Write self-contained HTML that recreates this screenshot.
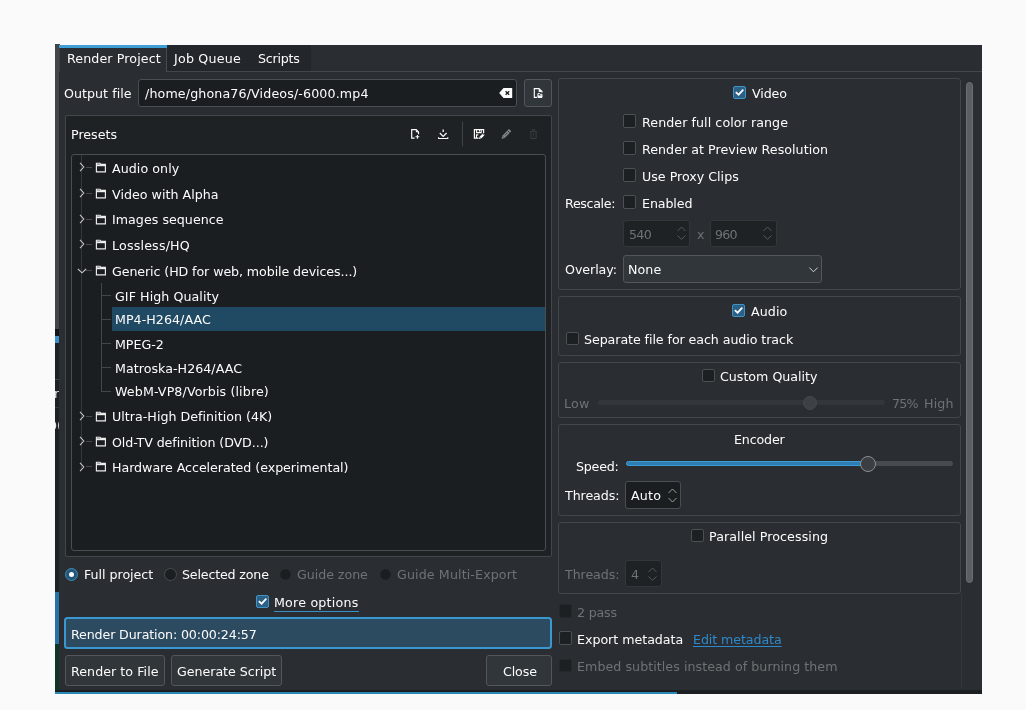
<!DOCTYPE html>
<html lang="en"><head><meta charset="utf-8"><title>Rendering</title>
<style>
html,body{margin:0;padding:0;background:#fafafa;}
#root{position:relative;width:1026px;height:710px;overflow:hidden;background:#fafafa;font-family:"DejaVu Sans", "Liberation Sans", sans-serif;font-size:12.65px;}
#root div,#root svg{position:absolute;box-sizing:border-box;}
.t{white-space:pre;will-change:transform;line-height:18px;height:18px;}
.frame{border:1px solid #43474b;border-radius:3px;}
.view{background:#1b1e20;border:1px solid #4a4e52;border-radius:3px;}
.btn{background:#31363b;border:1px solid #53575b;border-radius:3px;}
.cb{width:13px;height:13.4px;border:1px solid #4c5053;border-radius:2px;background:#1d2023;}
.cb.on{height:12.9px;border-color:#4093c4;background:#2b6186;}
.cb.dis{border-color:#26292c;background:#1d2023;}
.rb{width:13px;height:13px;border-radius:50%;border:1px solid #65696c;background:#1f2225;}
.spin{background:#1b1e20;border:1px solid #4a4e52;border-radius:3px;}
.spin.dis{border-color:#33373a;background:#1f2225;}

</style></head>
<body>
<div id="root">
<!-- underlying application strip -->
<div style="left:55px;top:44px;width:5px;height:285px;background:#424445"></div>
<div style="left:55px;top:329px;width:5px;height:7px;background:#121416"></div>
<div style="left:55px;top:336px;width:5px;height:7px;background:#3b8fc7"></div>
<div style="left:55px;top:343px;width:5px;height:249px;background:#1e2124"></div>
<div style="left:55px;top:591.6px;width:5px;height:52.2px;background:#2673aa"></div>
<div style="left:55px;top:643.8px;width:5px;height:48.2px;background:#0e3625"></div>
<div style="left:55px;top:690px;width:927px;height:4px;background:#1c1f22"></div>
<div style="left:55px;top:692px;width:622px;height:2px;background:#2b87b4"></div>
<div style="left:55px;top:379px;width:5px;height:1px;background:#44484b"></div>
<div style="left:55px;top:407px;width:5px;height:1px;background:#34383b"></div>
<div class="clip" style="left:55px;top:384px;width:4.5px;height:20px;overflow:hidden"><div class="t" style="left:-1.5px;top:1px;color:#e8e8e8">r</div></div>
<div class="clip" style="left:55px;top:415px;width:4.8px;height:20px;overflow:hidden"><div class="t" style="left:-6.5px;top:1.5px;color:#e8e8e8">0(</div></div>
<!-- dialog -->
<div id="dlg" style="left:59px;top:45px;width:923px;height:645px;background:#2a2e32"></div>
<!-- tabs -->
<div style="left:167px;top:45px;width:143.5px;height:26px;background:#23262a"></div>
<div style="left:59px;top:70.6px;width:923px;height:1px;background:#43474b"></div>
<div style="left:59px;top:45px;width:108px;height:27px;background:#2a2e32;border-left:1px solid #3c4044;border-right:1px solid #474b4f"></div>
<div style="left:59px;top:45px;width:108px;height:3px;background:#3d9fd6"></div>
<!-- output file -->
<div class="view" style="left:138.3px;top:79px;width:378.7px;height:27.6px"></div>
<div class="btn" style="left:524px;top:79px;width:28px;height:28px"></div>
<!-- presets frame -->
<div class="frame" style="left:64.5px;top:114.5px;width:487.5px;height:442px;background:#1f2225;border-radius:2px"></div>
<div class="view" style="left:71px;top:154px;width:475.3px;height:397px"></div>
<!-- icon overlay (page coordinates) -->
<svg id="ov" style="left:0;top:0" width="1026" height="710" viewBox="0 0 1026 710" fill="none">
<!-- clear text -->
<path d="M503.5 88H512.2V98H503.5L499.2 93Z" fill="#fcfcfc"/>
<path d="M505.6 91.2L509.2 94.8M509.2 91.2L505.6 94.8" stroke="#1b1e20" stroke-width="1.3"/>
<!-- open file -->
<path d="M537 97.4H534.3V88.6H539L542 91.6V92.6" stroke="#fcfcfc" stroke-width="1.15"/>
<path d="M538.7 88.4V92H542.3Z" fill="#fcfcfc"/>
<path d="M537.9 93.6H539.6L540.2 94.3H542V97.4H537.9Z" stroke="#fcfcfc" stroke-width="1"/>
<path d="M538 95.4H542V97.6H538Z" fill="#fcfcfc"/>
<!-- separator -->
<path d="M462.5 121.5V146.5" stroke="#3f4347" stroke-width="1"/>
<!-- document new -->
<path d="M414.6 138.2H411.7V129.7H416.2L418.5 132V134.3" stroke="#fcfcfc" stroke-width="1.2"/>
<path d="M415.9 129.7V132.3H418.5Z" fill="#fcfcfc"/>
<path d="M417.4 134.9V138.7M415.5 136.8H419.3" stroke="#fcfcfc" stroke-width="1.1"/>
<!-- download -->
<path d="M439.8 133L443.2 136.4L446.6 133" stroke="#fcfcfc" stroke-width="1.2"/>
<path d="M443.2 129.4V132" stroke="#fcfcfc" stroke-width="1.3"/>
<path d="M438.6 137.3V138.5H447.8V137.3" stroke="#fcfcfc" stroke-width="1.1"/>
<!-- save edit -->
<path d="M478.6 138.2H474.4V129.6H483.6V133" stroke="#fcfcfc" stroke-width="1.2"/>
<path d="M476.6 129.6V132.6H481.2V129.6" stroke="#fcfcfc" stroke-width="1.1"/>
<path d="M479.5 129.8V131.6" stroke="#fcfcfc" stroke-width="1"/>
<path d="M476.5 138V134.9H478.2" stroke="#fcfcfc" stroke-width="1.1"/>
<path d="M480.4 137.6L483.9 134.1" stroke="#fcfcfc" stroke-width="2.3"/>
<path d="M478.9 139.1L479.4 137L481 138.6Z" fill="#fcfcfc"/>
<path d="M482.4 133.6L484.4 135.6" stroke="#1f2225" stroke-width="0.7"/>
<!-- pencil (disabled-ish) -->
<path d="M503.5 136.8L510.1 130.2" stroke="#84878a" stroke-width="3.3"/>
<path d="M501.6 138.8L502.1 135.9L504.5 138.3Z" fill="#84878a"/>
<path d="M507.6 130.6L509.8 132.8" stroke="#1f2225" stroke-width="0.8"/>
<path d="M504.9 135.4L507.6 132.7" stroke="#1f2225" stroke-width="0.7"/>
<!-- trash (disabled) -->
<path d="M530.9 131.6V138.5H536.1V131.6M530 131.6H537M532.3 131.4V129.6H534.7V131.4" stroke="#383c3f" stroke-width="1"/>
<path d="M533.5 133V137" stroke="#303437" stroke-width="1"/>
</svg>
<!-- tree selection -->
<div style="left:112px;top:307px;width:433.3px;height:24px;background:#204a63"></div>
<!-- tree branches -->
<div style="left:81px;top:155px;width:1px;height:313px;background:#34383b"></div>
<div style="left:101px;top:283px;width:1px;height:109px;background:#43474a"></div>
<svg style="left:79.3px;top:162.40px" width="7" height="10" viewBox="0 0 7 10"><path d="M1 0.9l3.8 4.1-3.8 4.1" fill="none" stroke="#c4c6c7" stroke-width="1.1"/></svg>
<div style="left:85.5px;top:167.00px;width:6px;height:1px;background:#474b4e"></div>
<svg style="left:95px;top:162.20px" width="12" height="11" viewBox="0 0 12 11"><path d="M1.4 1.2h3.6l1 1.2h4.4v7.4H1.4z" fill="none" stroke="#ededed" stroke-width="1.15"/><rect x="1.4" y="2.3" width="9" height="1.9" fill="#ededed"/></svg>
<svg style="left:79.3px;top:188.15px" width="7" height="10" viewBox="0 0 7 10"><path d="M1 0.9l3.8 4.1-3.8 4.1" fill="none" stroke="#c4c6c7" stroke-width="1.1"/></svg>
<div style="left:85.5px;top:192.75px;width:6px;height:1px;background:#474b4e"></div>
<svg style="left:95px;top:187.95px" width="12" height="11" viewBox="0 0 12 11"><path d="M1.4 1.2h3.6l1 1.2h4.4v7.4H1.4z" fill="none" stroke="#ededed" stroke-width="1.15"/><rect x="1.4" y="2.3" width="9" height="1.9" fill="#ededed"/></svg>
<svg style="left:79.3px;top:213.90px" width="7" height="10" viewBox="0 0 7 10"><path d="M1 0.9l3.8 4.1-3.8 4.1" fill="none" stroke="#c4c6c7" stroke-width="1.1"/></svg>
<div style="left:85.5px;top:218.50px;width:6px;height:1px;background:#474b4e"></div>
<svg style="left:95px;top:213.70px" width="12" height="11" viewBox="0 0 12 11"><path d="M1.4 1.2h3.6l1 1.2h4.4v7.4H1.4z" fill="none" stroke="#ededed" stroke-width="1.15"/><rect x="1.4" y="2.3" width="9" height="1.9" fill="#ededed"/></svg>
<svg style="left:79.3px;top:239.40px" width="7" height="10" viewBox="0 0 7 10"><path d="M1 0.9l3.8 4.1-3.8 4.1" fill="none" stroke="#c4c6c7" stroke-width="1.1"/></svg>
<div style="left:85.5px;top:244.00px;width:6px;height:1px;background:#474b4e"></div>
<svg style="left:95px;top:239.20px" width="12" height="11" viewBox="0 0 12 11"><path d="M1.4 1.2h3.6l1 1.2h4.4v7.4H1.4z" fill="none" stroke="#ededed" stroke-width="1.15"/><rect x="1.4" y="2.3" width="9" height="1.9" fill="#ededed"/></svg>
<svg style="left:77px;top:267.55px" width="10" height="7" viewBox="0 0 10 7"><path d="M0.9 1l4.1 3.8 4.1-3.8" fill="none" stroke="#c4c6c7" stroke-width="1.1"/></svg>
<div style="left:85.5px;top:269.75px;width:6px;height:1px;background:#474b4e"></div>
<svg style="left:95px;top:264.95px" width="12" height="11" viewBox="0 0 12 11"><path d="M1.4 1.2h3.6l1 1.2h4.4v7.4H1.4z" fill="none" stroke="#ededed" stroke-width="1.15"/><rect x="1.4" y="2.3" width="9" height="1.9" fill="#ededed"/></svg>
<svg style="left:79.3px;top:410.90px" width="7" height="10" viewBox="0 0 7 10"><path d="M1 0.9l3.8 4.1-3.8 4.1" fill="none" stroke="#c4c6c7" stroke-width="1.1"/></svg>
<div style="left:85.5px;top:415.50px;width:6px;height:1px;background:#474b4e"></div>
<svg style="left:95px;top:410.70px" width="12" height="11" viewBox="0 0 12 11"><path d="M1.4 1.2h3.6l1 1.2h4.4v7.4H1.4z" fill="none" stroke="#ededed" stroke-width="1.15"/><rect x="1.4" y="2.3" width="9" height="1.9" fill="#ededed"/></svg>
<svg style="left:79.3px;top:436.40px" width="7" height="10" viewBox="0 0 7 10"><path d="M1 0.9l3.8 4.1-3.8 4.1" fill="none" stroke="#c4c6c7" stroke-width="1.1"/></svg>
<div style="left:85.5px;top:441.00px;width:6px;height:1px;background:#474b4e"></div>
<svg style="left:95px;top:436.20px" width="12" height="11" viewBox="0 0 12 11"><path d="M1.4 1.2h3.6l1 1.2h4.4v7.4H1.4z" fill="none" stroke="#ededed" stroke-width="1.15"/><rect x="1.4" y="2.3" width="9" height="1.9" fill="#ededed"/></svg>
<svg style="left:79.3px;top:461.65px" width="7" height="10" viewBox="0 0 7 10"><path d="M1 0.9l3.8 4.1-3.8 4.1" fill="none" stroke="#c4c6c7" stroke-width="1.1"/></svg>
<div style="left:85.5px;top:466.25px;width:6px;height:1px;background:#474b4e"></div>
<svg style="left:95px;top:461.45px" width="12" height="11" viewBox="0 0 12 11"><path d="M1.4 1.2h3.6l1 1.2h4.4v7.4H1.4z" fill="none" stroke="#ededed" stroke-width="1.15"/><rect x="1.4" y="2.3" width="9" height="1.9" fill="#ededed"/></svg>
<div style="left:101px;top:294.95px;width:10px;height:1px;background:#43474a"></div>
<div style="left:101px;top:318.70px;width:10px;height:1px;background:#43474a"></div>
<div style="left:101px;top:343.20px;width:10px;height:1px;background:#43474a"></div>
<div style="left:101px;top:366.95px;width:10px;height:1px;background:#43474a"></div>
<div style="left:101px;top:390.70px;width:10px;height:1px;background:#43474a"></div>
<!-- radios -->
<div class="rb" style="left:65.2px;top:567.5px;border:1.4px solid #3d8cbd;background:#255578"></div>
<div style="left:69.2px;top:571.5px;width:5px;height:5px;border-radius:50%;background:#fcfcfc"></div>
<div class="rb" style="left:163.7px;top:567.5px;border-color:#484c4f;background:#1c1f21"></div>
<div class="rb" style="left:280px;top:568.7px;width:11.4px;height:11.4px;border-color:#202326;background:#1b1e20"></div>
<div class="rb" style="left:379.8px;top:568.7px;width:11.4px;height:11.4px;border-color:#202326;background:#1b1e20"></div>
<!-- more options -->
<div style="left:274px;top:611px;width:85px;height:1px;background:#3a8fc4"></div>
<!-- render duration -->
<div style="left:64px;top:617.2px;width:488px;height:32.2px;background:#2c4b61;border:2px solid #3a97cf;border-radius:3.5px"></div>
<!-- buttons -->
<div class="btn" style="left:65px;top:655px;width:100px;height:31px"></div>
<div class="btn" style="left:171px;top:655px;width:111px;height:31px"></div>
<div class="btn" style="left:486px;top:655px;width:66px;height:31px"></div>
<!-- right: scroll area line -->
<div style="left:961px;top:594px;width:1px;height:94px;background:#34383c"></div>
<!-- scrollbar -->
<div style="left:966.2px;top:82.3px;width:6.4px;height:500.5px;border-radius:4px;background:#5b5f63;border:1px solid #6c7073"></div>
<!-- groups -->
<div class="frame" style="left:558px;top:78px;width:403px;height:212px"></div>
<div class="frame" style="left:558px;top:296px;width:403px;height:60px"></div>
<div class="frame" style="left:558px;top:362px;width:403px;height:56px"></div>
<div class="frame" style="left:558px;top:424px;width:403px;height:92px"></div>
<div class="frame" style="left:558px;top:522px;width:403px;height:72px"></div>
<!-- video group -->
<div class="spin dis" style="left:623.4px;top:220.4px;width:67px;height:27px"></div>
<div class="spin dis" style="left:710px;top:220.4px;width:67px;height:27px"></div>
<svg style="left:676px;top:224px" width="11" height="19" viewBox="0 0 11 19"><path d="M1.5 7l4-4 4 4M1.5 11.4l4 4 4-4" fill="none" stroke="#54585b" stroke-width="1"/></svg>
<svg style="left:762px;top:224px" width="11" height="19" viewBox="0 0 11 19"><path d="M1.5 7l4-4 4 4M1.5 11.4l4 4 4-4" fill="none" stroke="#54585b" stroke-width="1"/></svg>
<div class="btn" style="left:623px;top:255px;width:199px;height:28.4px"></div>
<svg style="left:807.7px;top:265.6px" width="11" height="8" viewBox="0 0 11 8"><path d="M1.4 1.6l4.1 4.2 4.1-4.2" fill="none" stroke="#d0d2d3" stroke-width="1"/></svg>
<!-- audio group -->
<!-- custom quality -->
<div style="left:598px;top:400px;width:287px;height:5px;border-radius:3px;background:#33373b"></div>
<div style="left:803px;top:396px;width:14px;height:14px;border-radius:50%;background:#3d4145;border:1px solid #45494d"></div>
<!-- encoder -->
<div style="left:626px;top:460.8px;width:327px;height:5.4px;border-radius:3px;background:#474b4f"></div>
<div style="left:626px;top:460.8px;width:242px;height:5.4px;border-radius:3px;background:#2f7db3;border:1px solid #3c9bd2"></div>
<div style="left:860px;top:456px;width:16px;height:16px;border-radius:50%;background:#3b3f43;border:1px solid #8b8e90"></div>
<div class="spin" style="left:625.2px;top:480.5px;width:55.6px;height:28px"></div>
<svg style="left:666.9px;top:485.6px" width="11" height="19" viewBox="0 0 11 19"><path d="M1.5 7l4-4 4 4M1.5 12l4 4 4-4" fill="none" stroke="#9c9fa1" stroke-width="1"/></svg>
<!-- parallel -->
<div class="spin dis" style="left:625px;top:560px;width:37px;height:27px"></div>
<svg style="left:647px;top:564.6px" width="11" height="19" viewBox="0 0 11 19"><path d="M1.5 7l4-4 4 4M1.5 11.4l4 4 4-4" fill="none" stroke="#54585b" stroke-width="1"/></svg>
<!-- bottom checkboxes -->
<div class="cb on" style="left:733.20px;top:86.10px"></div>
<svg style="left:733.20px;top:86.10px" width="13" height="13" viewBox="0 0 13 13"><path d="M2.8 6.1l2.8 2.6 4.7-5" fill="none" stroke="#fcfcfc" stroke-width="1.8"/></svg>
<div class="cb " style="left:623.20px;top:114.40px"></div>
<div class="cb " style="left:623.20px;top:141.40px"></div>
<div class="cb " style="left:623.20px;top:168.40px"></div>
<div class="cb " style="left:623.20px;top:195.40px"></div>
<div class="cb on" style="left:732.45px;top:304.10px"></div>
<svg style="left:732.45px;top:304.10px" width="13" height="13" viewBox="0 0 13 13"><path d="M2.8 6.1l2.8 2.6 4.7-5" fill="none" stroke="#fcfcfc" stroke-width="1.8"/></svg>
<div class="cb " style="left:565.70px;top:331.90px"></div>
<div class="cb " style="left:701.70px;top:368.90px"></div>
<div class="cb " style="left:690.70px;top:528.90px"></div>
<div class="cb dis" style="left:558.70px;top:604.40px"></div>
<div class="cb " style="left:558.70px;top:631.40px"></div>
<div class="cb dis" style="left:558.70px;top:658.90px"></div>
<div class="cb on" style="left:255.95px;top:595.10px"></div>
<svg style="left:255.95px;top:595.10px" width="13" height="13" viewBox="0 0 13 13"><path d="M2.8 6.1l2.8 2.6 4.7-5" fill="none" stroke="#fcfcfc" stroke-width="1.8"/></svg>
<div class="t" style="left:66.85px;top:50.40px;color:#fcfcfc;letter-spacing:0.113px;">Render Project</div>
<div class="t" style="left:173.85px;top:50.40px;color:#fcfcfc;letter-spacing:0.215px;">Job Queue</div>
<div class="t" style="left:258.10px;top:50.40px;color:#fcfcfc;letter-spacing:-0.250px;">Scripts</div>
<div class="t" style="left:64.35px;top:85.40px;color:#fcfcfc;letter-spacing:0.031px;">Output file</div>
<div class="t" style="left:144.60px;top:85.40px;color:#fcfcfc;letter-spacing:0.134px;">/home/ghona76/Videos/-6000.mp4</div>
<div class="t" style="left:70.85px;top:126.40px;color:#fcfcfc;letter-spacing:-0.003px;">Presets</div>
<div class="t" style="left:112.35px;top:159.90px;color:#fcfcfc;letter-spacing:0.062px;">Audio only</div>
<div class="t" style="left:112.35px;top:185.65px;color:#fcfcfc;letter-spacing:0.019px;">Video with Alpha</div>
<div class="t" style="left:112.35px;top:211.40px;color:#fcfcfc;letter-spacing:0.028px;">Images sequence</div>
<div class="t" style="left:112.35px;top:236.90px;color:#fcfcfc;letter-spacing:0.184px;">Lossless/HQ</div>
<div class="t" style="left:112.35px;top:262.65px;color:#fcfcfc;letter-spacing:-0.093px;">Generic (HD for web, mobile devices...)</div>
<div class="t" style="left:115.10px;top:287.65px;color:#fcfcfc;letter-spacing:0.062px;">GIF High Quality</div>
<div class="t" style="left:115.10px;top:311.40px;color:#fcfcfc;letter-spacing:0.043px;">MP4-H264/AAC</div>
<div class="t" style="left:115.10px;top:335.90px;color:#fcfcfc;letter-spacing:-0.034px;">MPEG-2</div>
<div class="t" style="left:115.10px;top:359.65px;color:#fcfcfc;letter-spacing:0.037px;">Matroska-H264/AAC</div>
<div class="t" style="left:115.10px;top:383.40px;color:#fcfcfc;letter-spacing:0.116px;">WebM-VP8/Vorbis (libre)</div>
<div class="t" style="left:112.35px;top:408.40px;color:#fcfcfc;letter-spacing:0.021px;">Ultra-High Definition (4K)</div>
<div class="t" style="left:112.35px;top:433.90px;color:#fcfcfc;letter-spacing:-0.084px;">Old-TV definition (DVD...)</div>
<div class="t" style="left:112.35px;top:459.15px;color:#fcfcfc;letter-spacing:-0.041px;">Hardware Accelerated (experimental)</div>
<div class="t" style="left:83.85px;top:566.00px;color:#fcfcfc;letter-spacing:-0.024px;">Full project</div>
<div class="t" style="left:182.10px;top:566.00px;color:#fcfcfc;letter-spacing:-0.165px;">Selected zone</div>
<div class="t" style="left:297.40px;top:566.00px;color:#6f7275;letter-spacing:-0.044px;">Guide zone</div>
<div class="t" style="left:397.10px;top:566.00px;color:#6f7275;letter-spacing:0.119px;">Guide Multi-Export</div>
<div class="t" style="left:274.35px;top:593.90px;color:#fcfcfc;letter-spacing:0.212px;">More options</div>
<div class="t" style="left:70.85px;top:625.90px;color:#fcfcfc;letter-spacing:-0.133px;">Render Duration: 00:00:24:57</div>
<div class="t" style="left:70.85px;top:662.90px;color:#fcfcfc;letter-spacing:0.047px;">Render to File</div>
<div class="t" style="left:177.10px;top:662.90px;color:#fcfcfc;letter-spacing:-0.033px;">Generate Script</div>
<div class="t" style="left:502.60px;top:662.90px;color:#fcfcfc;letter-spacing:-0.109px;">Close</div>
<div class="t" style="left:751.60px;top:84.90px;color:#fcfcfc;letter-spacing:-0.105px;">Video</div>
<div class="t" style="left:641.60px;top:113.90px;color:#fcfcfc;letter-spacing:0.071px;">Render full color range</div>
<div class="t" style="left:641.60px;top:140.90px;color:#fcfcfc;letter-spacing:0.036px;">Render at Preview Resolution</div>
<div class="t" style="left:641.60px;top:167.90px;color:#fcfcfc;letter-spacing:0.000px;">Use Proxy Clips</div>
<div class="t" style="left:565.35px;top:194.90px;color:#fcfcfc;letter-spacing:-0.333px;">Rescale:</div>
<div class="t" style="left:641.60px;top:194.90px;color:#fcfcfc;letter-spacing:-0.099px;">Enabled</div>
<div class="t" style="left:628.85px;top:225.80px;color:#6f7275;letter-spacing:-0.695px;">540</div>
<div class="t" style="left:697.10px;top:225.80px;color:#6f7275;letter-spacing:0.000px;">x</div>
<div class="t" style="left:715.35px;top:225.80px;color:#6f7275;letter-spacing:-0.800px;">960</div>
<div class="t" style="left:564.60px;top:261.40px;color:#fcfcfc;letter-spacing:-0.069px;">Overlay:</div>
<div class="t" style="left:628.35px;top:261.40px;color:#fcfcfc;letter-spacing:0.089px;">None</div>
<div class="t" style="left:750.85px;top:302.90px;color:#fcfcfc;letter-spacing:0.078px;">Audio</div>
<div class="t" style="left:584.10px;top:331.40px;color:#fcfcfc;letter-spacing:-0.073px;">Separate file for each audio track</div>
<div class="t" style="left:720.10px;top:368.40px;color:#fcfcfc;letter-spacing:-0.010px;">Custom Quality</div>
<div class="t" style="left:563.90px;top:395.40px;color:#6f7275;letter-spacing:0.247px;">Low</div>
<div class="t" style="left:892.10px;top:395.40px;color:#6f7275;letter-spacing:-0.800px;">75%</div>
<div class="t" style="left:924.35px;top:395.40px;color:#6f7275;letter-spacing:0.146px;">High</div>
<div class="t" style="left:733.85px;top:430.90px;color:#fcfcfc;letter-spacing:-0.156px;">Encoder</div>
<div class="t" style="left:576.35px;top:457.90px;color:#fcfcfc;letter-spacing:-0.228px;">Speed:</div>
<div class="t" style="left:564.60px;top:487.40px;color:#fcfcfc;letter-spacing:-0.078px;">Threads:</div>
<div class="t" style="left:630.85px;top:487.40px;color:#fcfcfc;letter-spacing:0.214px;">Auto</div>
<div class="t" style="left:709.10px;top:528.40px;color:#fcfcfc;letter-spacing:0.079px;">Parallel Processing</div>
<div class="t" style="left:564.60px;top:565.90px;color:#6f7275;letter-spacing:-0.078px;">Threads:</div>
<div class="t" style="left:630.85px;top:565.90px;color:#6f7275;letter-spacing:0.000px;">4</div>
<div class="t" style="left:577.10px;top:603.90px;color:#6f7275;letter-spacing:-0.203px;">2 pass</div>
<div class="t" style="left:577.10px;top:630.90px;color:#fcfcfc;letter-spacing:-0.030px;">Export metadata</div>
<div class="t" style="left:692.85px;top:630.90px;color:#2f88c9;letter-spacing:-0.085px;text-decoration:underline;text-decoration-thickness:1px;text-underline-offset:1.5px;">Edit metadata</div>
<div class="t" style="left:577.10px;top:658.40px;color:#6f7275;letter-spacing:0.051px;">Embed subtitles instead of burning them</div>
</div>
</body></html>
